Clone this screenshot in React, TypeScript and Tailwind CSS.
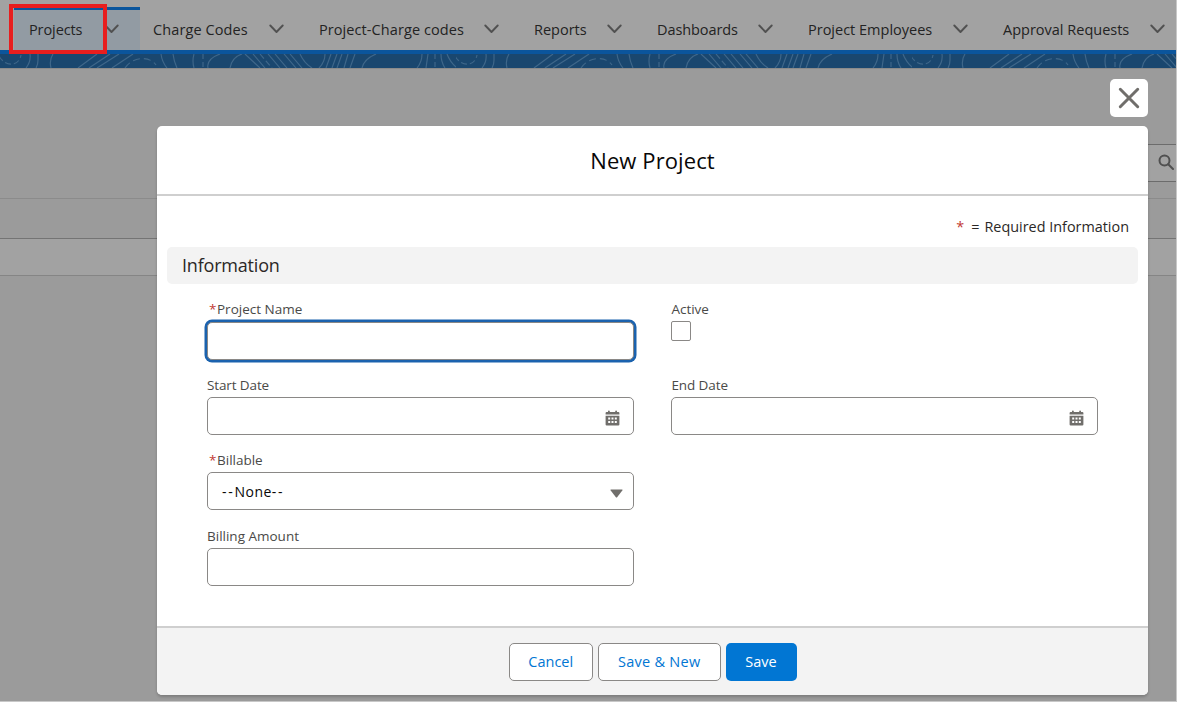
import React from 'react';

interface NavItem {
  label: string;
  width: string;
  tracking: string;
}

const navItems: NavItem[] = [
  { label: 'Charge Codes', width: 'w-[166px]', tracking: 'tracking-[0.1px]' },
  { label: 'Project-Charge codes', width: 'w-[215px]', tracking: 'tracking-[0.08px]' },
  { label: 'Reports', width: 'w-[123px]', tracking: '' },
  { label: 'Dashboards', width: 'w-[151px]', tracking: 'tracking-[-0.08px]' },
  { label: 'Project Employees', width: 'w-[195px]', tracking: '' },
  { label: 'Approval Requests', width: 'w-[197px]', tracking: '' },
];

const Chevron: React.FC = () => (
  <svg width="15" height="10" viewBox="0 0 15 10" className="shrink-0">
    <path d="M1.3 1.5 L7.5 8 L13.7 1.5" fill="none" stroke="#515151" strokeWidth="1.9" strokeLinecap="round" strokeLinejoin="round" />
  </svg>
);

const CalendarIcon: React.FC = () => (
  <svg width="15" height="16" viewBox="0 0 15 16" fill="#706e6b">
    <path d="M3 1.2Q3 .4 3.9 .4T4.8 1.2V2H10.2V1.2Q10.2 .4 11.1 .4T12 1.2V2H13.4Q14.4 2 14.4 3V4.4H.6V3Q.6 2 1.6 2H3Z" />
    <path fillRule="evenodd" d="M.6 5.7H14.4V14.4Q14.4 15.5 13.3 15.5H1.7Q.6 15.5 .6 14.4ZM3.2 7.6V9.6H5.2V7.6ZM6.5 7.6V9.6H8.5V7.6ZM9.8 7.6V9.6H11.8V7.6ZM3.2 11V13H5.2V11ZM6.5 11V13H8.5V11ZM9.8 11V13H11.8V11Z" />
  </svg>
);

// Contour lines of the brand band, one tile is 456px wide
const BrandBand: React.FC = () => (
  <svg width="1176" height="14" className="block shrink-0 bg-[#1a476f]">
    <defs>
      <pattern id="contours" width="456" height="14" patternUnits="userSpaceOnUse">
        <g fill="none" stroke="#3f678a" strokeWidth="1.1">
          <path d="M-1 2C5 13 19 13 21 1" strokeDasharray="6 3" />
          <path d="M30 0Q31 8 26 14M38 0V6Q38 11 36 14M53 0Q49 6 51 14" />
          <path d="M97 0L78 14M110 0L89 14M119 0L97 14M133 0L112 14" />
          <path d="M125 14C133 2 150 2 156 11" strokeDasharray="7 4" />
          <path d="M161 0Q162 8 167 14M173 0Q174 8 177 14M194 0Q192 7 194 14M220 0Q206 5 208 14" />
          <path d="M203 0V14" strokeDasharray="5 3" />
          <path d="M230 14Q232 3 242 0M245 0L260 14M253 0L265 14M268 0L280 14M275 0L287 14M284 0L296 14M290 0L302 14M300 0Q304 9 312 14" />
          <path d="M260 0L272 14" strokeDasharray="6 3" />
          <path d="M325 0Q325 8 319 14M331 0L326 14M337 0L332 14M342 0L337 14M348 0L344 14M355 0L350 14M376 0Q364 5 362 14" />
          <path d="M422 0Q422 8 417 14M428 0L426 14M441 0Q441 8 445 14M447 0Q450 8 457 14" />
          <path d="M435 0V14" strokeDasharray="5 3" />
        </g>
      </pattern>
    </defs>
    <rect width="1176" height="14" fill="url(#contours)" />
  </svg>
);

const NavBar: React.FC = () => (
  <nav className="flex h-[50px] shrink-0 items-end overflow-hidden bg-[#a2a2a2] pl-[14px] text-[14.5px] text-[#232323]">
    <div className="mr-[13px] flex h-[43px] w-[126px] shrink-0 items-center justify-between border-t-[3px] border-[#0b559c] bg-[#929ba3] pr-[21px] pl-[15px]">
      <span className="tracking-[-0.1px]">Projects</span>
      <div className="pb-[2px]">
        <Chevron />
      </div>
    </div>
    {navItems.map((item) => (
      <div key={item.label} className={`flex h-[40px] shrink-0 items-center justify-between pr-[35px] ${item.width}`}>
        <span className={`whitespace-nowrap ${item.tracking}`}>{item.label}</span>
        <div className="pb-[2px]">
          <Chevron />
        </div>
      </div>
    ))}
  </nav>
);

const Backdrop: React.FC = () => (
  <div className="flex h-[701px] w-[1176px] flex-col overflow-hidden bg-[#9b9b9b]">
    <NavBar />
    <div className="h-1 shrink-0 bg-[#0b559c]" />
    <BrandBand />
    <div className="flex h-[130px] shrink-0 justify-end border-t border-[#8b8b8b] pt-[75px]">
      <div className="flex h-[38px] w-[76px] items-center justify-end border-y-[1.5px] border-[#6c6c6c] bg-[#a2a2a2] pr-[2px] pb-[2px]">
        <svg width="16" height="16" viewBox="0 0 16 16" fill="none" stroke="#505050" strokeWidth="2">
          <circle cx="6.5" cy="6.5" r="5" />
          <path d="M10.2 10.2L15 15" strokeLinecap="round" />
        </svg>
      </div>
    </div>
    <div className="h-10 shrink-0 border-t border-[#8b8b8b]" />
    <div className="h-[38px] shrink-0 border-t border-b border-t-[#747474] border-b-[#858585] bg-[#a2a2a2]" />
  </div>
);

interface FieldProps {
  label: string;
  required?: boolean;
  tracking?: string;
  children: React.ReactNode;
}

const Field: React.FC<FieldProps> = ({ label, required, tracking = '', children }) => (
  <div className="h-[75.5px] w-[427px]">
    <div className="flex h-[22px] items-center pb-[1px] text-[13.5px] text-[#4a4a48]">
      {required && <span className="w-[10px] pl-[2px] text-[#c23934]">*</span>}
      <span className={`whitespace-nowrap ${tracking}`}>{label}</span>
    </div>
    {children}
  </div>
);

const box = 'flex h-[38px] w-full items-center rounded-[5px] border-[1.5px] border-[#8a8886] bg-white';

const NewProjectModal: React.FC = () => (
  <div className="absolute top-[126px] left-[157px] flex h-[569px] w-[991px] flex-col overflow-hidden rounded-[5px] bg-white shadow-[0_2px_3px_rgba(0,0,0,0.2)]">
    <div className="flex h-[70px] shrink-0 items-center justify-center border-b-2 border-[#cfcfcf] text-[#080707]">
      <h2 className="text-[22px] tracking-[0.1px]">New Project</h2>
    </div>
    <div className="flex grow flex-col px-[10px]">
      <div className="flex h-[51px] shrink-0 items-center justify-end pt-[10px] pr-[9px] text-[14.4px] text-[#2b2826]">
        <span className="mr-[7px] text-[#c23934]">*</span>
        <span className="mr-[5px]">=</span>
        <span>Required Information</span>
      </div>
      <div className="flex h-[37px] shrink-0 items-center rounded-[5px] bg-[#f3f3f3] pl-[15px] text-[18px] text-[#2b2826]">
        <span className="tracking-[-0.2px]">Information</span>
      </div>
      <div className="flex gap-[37.4px] pt-[15px] pl-[40px]">
        <div>
          <Field label="Project Name" required>
            <div className={`${box} mt-[1px] shadow-[0_0_0_2.5px_#1b62ae]`} />
          </Field>
          <Field label="Start Date" tracking="tracking-[-0.12px]">
            <div className={`${box} justify-end pt-[5px] pr-[13px]`}>
              <CalendarIcon />
            </div>
          </Field>
          <Field label="Billable" required>
            <div className={`${box} justify-between pr-[10px] pl-[14px] text-[14px] text-[#080707]`}>
              <span>
                <span className="tracking-[1.7px]">--</span>
                <span className="tracking-[0.5px]">None</span>
                <span className="tracking-[1.7px]">--</span>
              </span>
              <svg width="13" height="9" viewBox="0 0 13 9" className="mt-1">
                <path d="M1 .5H12Q13 .5 12.3 1.5L7.3 8Q6.5 9 5.7 8L.7 1.5Q0 .5 1 .5Z" fill="#706e6b" />
              </svg>
            </div>
          </Field>
          <Field label="Billing Amount">
            <div className={box} />
          </Field>
        </div>
        <div>
          <Field label="Active">
            <div className="h-5 w-5 rounded-[2px] border-[1.5px] border-[#8a8886]" />
          </Field>
          <Field label="End Date" tracking="tracking-[-0.08px]">
            <div className={`${box} justify-end pt-[5px] pr-[13px]`}>
              <CalendarIcon />
            </div>
          </Field>
        </div>
      </div>
    </div>
    <div className="flex h-[69px] shrink-0 items-center justify-center gap-[5px] border-t-2 border-[#cfcfcf] bg-[#f3f3f3] text-[14.5px] text-[#0176d3]">
      <button className="h-[38px] w-[84.5px] rounded-[5px] border-[1.5px] border-[#8a8886] bg-white">Cancel</button>
      <button className="h-[38px] w-[122.5px] rounded-[5px] border-[1.5px] border-[#8a8886] bg-white tracking-[0.25px]">Save &amp; New</button>
      <button className="h-[38px] w-[71px] rounded-[5px] bg-[#0176d3] text-white">Save</button>
    </div>
  </div>
);

export default function App() {
  return (
    <div className="relative h-[702px] w-[1177px] overflow-hidden bg-[#c8c8c8] font-['Open_Sans',sans-serif]">
      <Backdrop />
      <button className="absolute top-[79px] left-[1110px] flex h-[38px] w-[38px] items-center justify-center rounded-[5px] bg-white">
        <svg width="22" height="22" viewBox="0 0 22 22" fill="none" stroke="#706e6b" strokeWidth="3" strokeLinecap="round">
          <path d="M2.3 2.3L19.7 19.7M19.7 2.3L2.3 19.7" />
        </svg>
      </button>
      <NewProjectModal />
      <div className="absolute top-[4px] left-[9px] h-[50px] w-[98px] border-4 border-[#e81e1e]" />
    </div>
  );
}
